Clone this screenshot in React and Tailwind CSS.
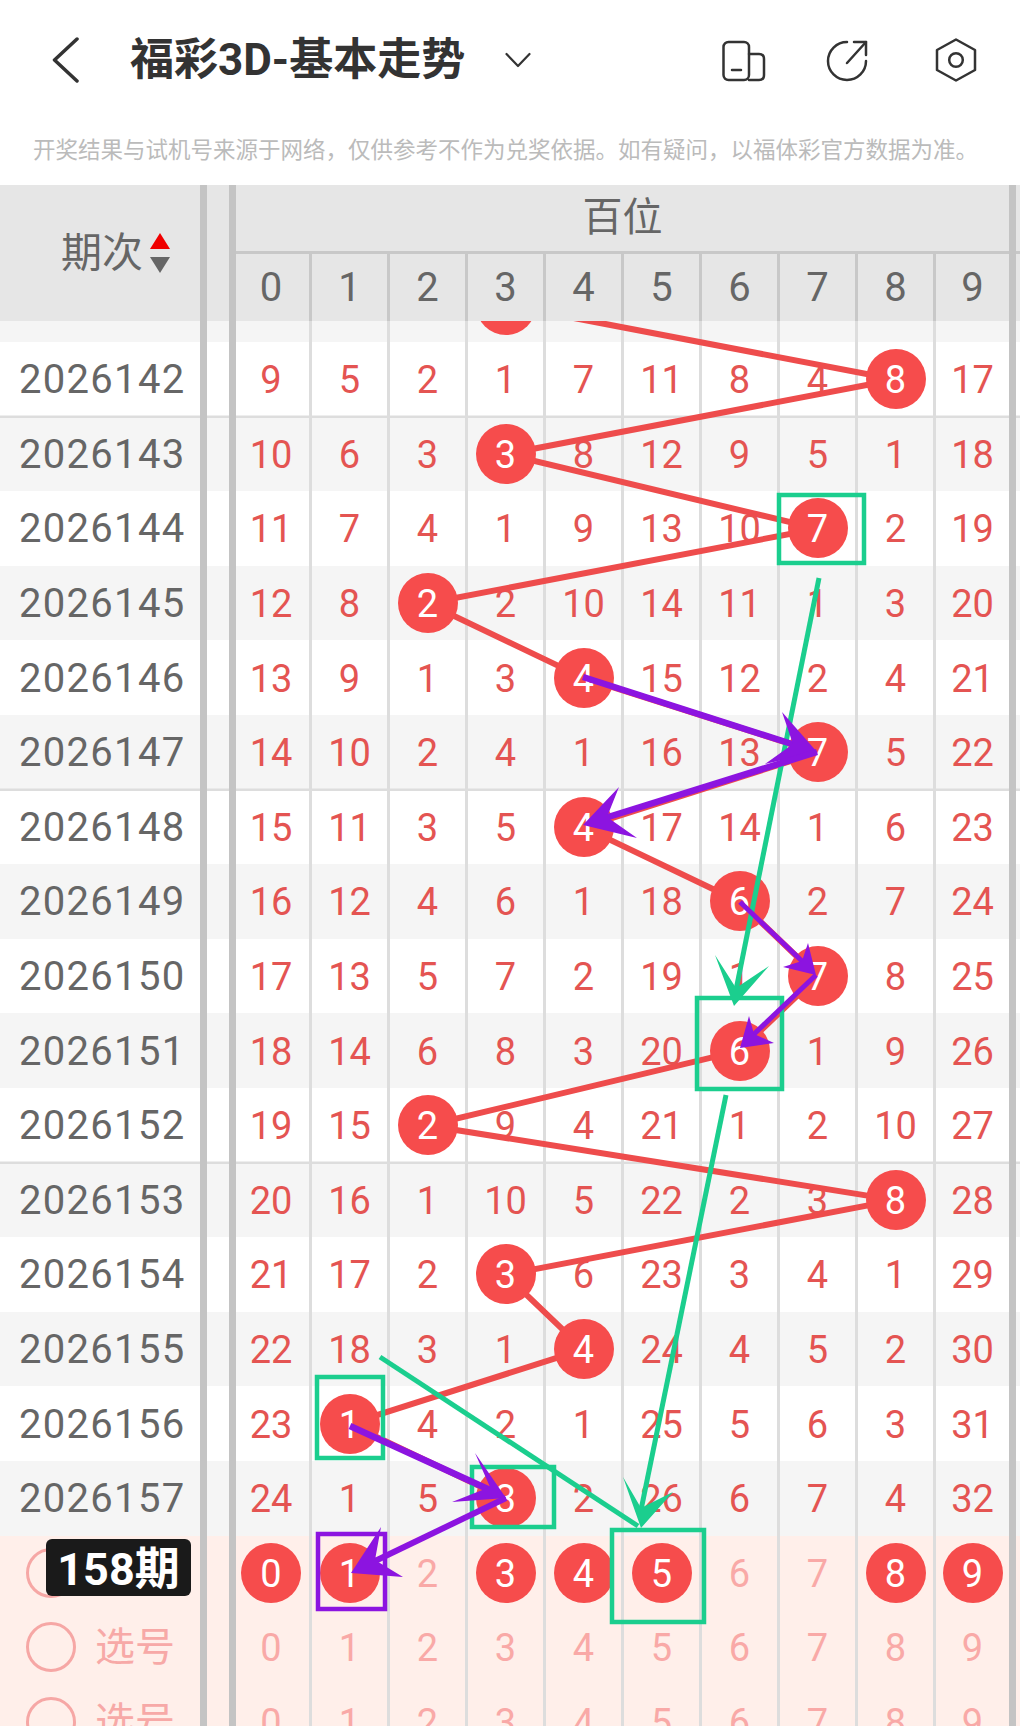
const rows = [
  { id: "", nums: [], ball: 3 },
  { id: "2026142", nums: [9, 5, 2, 1, 7, 11, 8, 4, 8, 17], ball: 8 },
  { id: "2026143", nums: [10, 6, 3, 3, 8, 12, 9, 5, 1, 18], ball: 3, line: true },
  { id: "2026144", nums: [11, 7, 4, 1, 9, 13, 10, 7, 2, 19], ball: 7 },
  { id: "2026145", nums: [12, 8, 2, 2, 10, 14, 11, 1, 3, 20], ball: 2 },
  { id: "2026146", nums: [13, 9, 1, 3, 4, 15, 12, 2, 4, 21], ball: 4 },
  { id: "2026147", nums: [14, 10, 2, 4, 1, 16, 13, 7, 5, 22], ball: 7 },
  { id: "2026148", nums: [15, 11, 3, 5, 4, 17, 14, 1, 6, 23], ball: 4, line: true },
  { id: "2026149", nums: [16, 12, 4, 6, 1, 18, 6, 2, 7, 24], ball: 6 },
  { id: "2026150", nums: [17, 13, 5, 7, 2, 19, 1, 7, 8, 25], ball: 7 },
  { id: "2026151", nums: [18, 14, 6, 8, 3, 20, 6, 1, 9, 26], ball: 6 },
  { id: "2026152", nums: [19, 15, 2, 9, 4, 21, 1, 2, 10, 27], ball: 2 },
  { id: "2026153", nums: [20, 16, 1, 10, 5, 22, 2, 3, 8, 28], ball: 8, line: true },
  { id: "2026154", nums: [21, 17, 2, 3, 6, 23, 3, 4, 1, 29], ball: 3 },
  { id: "2026155", nums: [22, 18, 3, 1, 4, 24, 4, 5, 2, 30], ball: 4 },
  { id: "2026156", nums: [23, 1, 4, 2, 1, 25, 5, 6, 3, 31], ball: 1 },
  { id: "2026157", nums: [24, 1, 5, 3, 2, 26, 6, 7, 4, 32], ball: 3 },
];

const digits = [0, 1, 2, 3, 4, 5, 6, 7, 8, 9];
const picked = [0, 1, 3, 4, 5, 8, 9];

const colX = (c) => 271.5 + c * 78;
const rowY = (i) => 304.9 + i * 74.6;

const redPoints = rows.map((r, i) => `${colX(r.ball)},${rowY(i)}`).join(" ");

const greenBoxes = [
  [779, 495, 85, 68],
  [697, 998, 85, 91],
  [317, 1377, 66, 81],
  [472, 1467, 82, 60],
  [612, 1530, 92, 92],
];

const arrows = [
  // green
  { color: "#1bce8e", w: 5, from: [819, 578], to: [736, 990], head: "734,1006 715,955 736,988 769,966" },
  { color: "#1bce8e", w: 5, from: [726, 1095], to: [641, 1510], head: "641,1528 623,1477 641,1508 673,1492" },
  { color: "#1bce8e", w: 5, from: [380, 1357], to: [638, 1526], head: "" },
  // purple
  { color: "#8c14e0", w: 6.5, from: [583, 677], to: [795, 745], head: "817,752 782,712 793,744 765,764" },
  { color: "#8c14e0", w: 6.5, from: [817, 752], to: [605, 818], head: "583,825 619,787 607,817 637,838" },
  { color: "#8c14e0", w: 5, from: [740, 902], to: [804, 963], head: "816,975 808,943 802,961 783,967" },
  { color: "#8c14e0", w: 5, from: [816, 975], to: [752, 1036], head: "740,1048 749,1016 754,1034 774,1043" },
  { color: "#8c14e0", w: 6.5, from: [350, 1426], to: [490, 1490], head: "506,1498 475,1453 490,1487 452,1502" },
  { color: "#8c14e0", w: 6, from: [506, 1498], to: [373, 1562], head: "351,1573 381,1527 375,1560 403,1577" },
];

const Ball = ({ value }) => (
  <span className="relative z-20 flex h-[60px] w-[60px] items-center justify-center rounded-full bg-[#f64c4c] text-white">
    <span className="mt-[2px]">{value}</span>
  </span>
);

// column widths shared by the header and the body
const colClass = (c) =>
  c === 0
    ? "w-[73px] pr-[3px]"
    : c === 9
      ? "w-[76px] border-l-[3px]"
      : "w-[78px] border-l-[3px]";

const Cell = ({ col, children }) => (
  <div
    className={`flex h-full items-center justify-center border-[#dddddd] ${colClass(col)}`}
  >
    {children}
  </div>
);

const Divider = () => <div className="h-full w-[7px] shrink-0 bg-[#c4c4c4]" />;

const Row = ({ left, bg, line, children }) => (
  <div
    className={`flex h-[74.6px] ${bg} ${
      line ? "shadow-[0_-1.5px_0_#dddddd,inset_0_1px_0_#dddddd]" : ""
    }`}
  >
    <div className="flex h-full w-[200px] shrink-0 items-center">{left}</div>
    <Divider />
    <div className="w-[22px] shrink-0" />
    <Divider />
    {children}
    <Divider />
  </div>
);

const PickLeft = ({ label = true }) => (
  <div className="flex items-center pl-[26px] text-[40px] leading-none text-[#f7a9a7]">
    <span className="h-[50px] w-[50px] rounded-full border-[3px] border-[#f6a7a5]" />
    {label && <span className="ml-[19px] mt-[2px]">选号</span>}
  </div>
);

export default function App() {
  return (
    <div className="relative h-[1726px] w-[1020px] overflow-hidden bg-white font-['Roboto','Noto_Sans_CJK_SC',sans-serif]">
      {/* Top bar */}
      <div className="flex h-[120px] items-center">
        <svg className="ml-[52px] h-[46px] w-[28px]" viewBox="0 0 28 46" fill="none" stroke="#333333" strokeWidth="3.5" strokeLinecap="round" strokeLinejoin="round">
          <path d="M25 2 L2.5 23 L25 44" />
        </svg>
        <div className="ml-[50px] w-[337px] whitespace-nowrap text-[44px] leading-none font-bold text-[#333333]">
          福彩3D-基本走势
        </div>
        <svg className="ml-[38px] h-[16px] w-[26px]" viewBox="0 0 26 16" fill="none" stroke="#333333" strokeWidth="2.2" strokeLinecap="round" strokeLinejoin="round">
          <path d="M1.5 2 L13 14 L24.5 2" />
        </svg>
        <div className="ml-auto mr-[42px] flex items-center gap-[59px]">
          <svg className="h-[44px] w-[44px]" viewBox="0 0 44 44" fill="none" stroke="#333333" strokeWidth="2.5" strokeLinecap="round" strokeLinejoin="round">
            <rect x="1.5" y="4" width="25.5" height="38" rx="5" />
            <path d="M27 16 H37 Q42 16 42 21 V37 Q42 42 37 42 H27" />
            <path d="M10 32 H19" />
          </svg>
          <svg className="h-[44px] w-[44px]" viewBox="0 0 44 44" fill="none" stroke="#333333" strokeWidth="2.5" strokeLinecap="round" strokeLinejoin="round">
            <path d="M22 4 A19 19 0 1 0 41 23" />
            <path d="M22 25 L41 4" />
            <path d="M29 4 H41 V17" />
          </svg>
          <svg className="ml-[6px] h-[44px] w-[44px]" viewBox="0 0 44 44" fill="none" stroke="#333333" strokeWidth="2.5" strokeLinecap="round" strokeLinejoin="round">
            <path d="M22 1.5 L41 12 V32 L22 42.5 L3 32 V12 Z" />
            <circle cx="22" cy="22" r="6.8" />
          </svg>
        </div>
      </div>

      {/* Notice */}
      <div className="flex h-[65px] items-start pl-[33px] pt-[19px] text-[22.5px] leading-none whitespace-nowrap text-[#bbbbbb]">
        开奖结果与试机号来源于网络，仅供参考不作为兑奖依据。如有疑问，以福体彩官方数据为准。
      </div>

      {/* Table header */}
      <div className="relative z-30 flex h-[136px] bg-[#e6e6e6] text-[#666666]">
        <div className="flex h-full w-[200px] shrink-0 items-start pl-[61px] pt-[48px]">
          <span className="text-[41px] leading-none">期次</span>
          <div className="ml-[7px] flex flex-col gap-[8px]">
            <span className="h-0 w-0 border-x-[10px] border-b-[16px] border-x-transparent border-b-[#f00000]" />
            <span className="h-0 w-0 border-x-[10px] border-t-[16px] border-x-transparent border-t-[#666666]" />
          </div>
        </div>
        <Divider />
        <div className="w-[22px] shrink-0" />
        <Divider />
        <div className="flex w-[773px] shrink-0 flex-col">
          <div className="flex h-[69px] items-center justify-center border-b-[3px] border-[#c8c8c8] text-[40px] leading-none">
            百位
          </div>
          <div className="flex flex-1">
            {digits.map((d) => (
              <div
                key={d}
                className={`flex items-center justify-center border-[#c8c8c8] text-[40px] leading-none ${colClass(d)}`}
              >
                {d}
              </div>
            ))}
          </div>
        </div>
        <Divider />
        <div className="flex-1 self-start pt-[66px]">
          <div className="h-[3px] bg-[#c8c8c8]" />
        </div>
      </div>

      {/* Table body, first row sits behind the header */}
      <div className="mt-[-53.6px] text-[38px] leading-none">
        {rows.map((r, i) => (
          <Row
            key={i}
            bg={i % 2 === 0 ? "bg-[#f5f5f5]" : "bg-white"}
            line={r.line}
            left={
              <span className="mt-[2px] pl-[19px] text-[40px] tracking-[1.3px] text-[#666666]">
                {r.id}
              </span>
            }
          >
            {digits.map((c) => (
              <Cell key={c} col={c}>
                {c === r.ball ? (
                  <Ball value={r.nums[c]} />
                ) : (
                  <span className="mt-[2px] text-[#e45452]">{r.nums[c]}</span>
                )}
              </Cell>
            ))}
          </Row>
        ))}

        {/* Pick rows */}
        <Row bg="bg-[#ffefea]" left={<PickLeft label={false} />}>
          {digits.map((d) => (
            <Cell key={d} col={d}>
              {picked.includes(d) ? (
                <Ball value={d} />
              ) : (
                <span className="mt-[2px] text-[#f9a9a7]">{d}</span>
              )}
            </Cell>
          ))}
        </Row>
        {[0, 1].map((k) => (
          <Row key={k} bg="bg-[#ffefea]" left={<PickLeft />}>
            {digits.map((d) => (
              <Cell key={d} col={d}>
                <span className="mt-[2px] text-[#f9a9a7]">{d}</span>
              </Cell>
            ))}
          </Row>
        ))}
      </div>

      {/* Red trend line */}
      <svg className="absolute left-0 top-0 z-10" width="1020" height="1726" fill="none">
        <polyline points={redPoints} stroke="#ee4c4c" strokeWidth="6" strokeLinejoin="round" />
      </svg>

      {/* Hand drawn marks */}
      <svg className="absolute left-0 top-0 z-40" width="1020" height="1726" fill="none">
        {greenBoxes.map(([x, y, w, h]) => (
          <rect key={x} x={x} y={y} width={w} height={h} stroke="#1bce8e" strokeWidth="4.5" />
        ))}
        <rect x="318" y="1534" width="67" height="75" stroke="#8c14e0" strokeWidth="4.5" />
        {arrows.map((a, i) => (
          <g key={i}>
            <line x1={a.from[0]} y1={a.from[1]} x2={a.to[0]} y2={a.to[1]} stroke={a.color} strokeWidth={a.w} />
            {a.head && <polygon points={a.head} fill={a.color} />}
          </g>
        ))}
      </svg>

      {/* Period badge */}
      <div className="absolute left-[46px] top-[1539px] z-50 flex h-[57px] w-[145px] items-center justify-center rounded-[6px] bg-[#1a1a1a] pt-[3px] text-[45px] leading-none font-bold text-white">
        158期
      </div>
    </div>
  );
}
